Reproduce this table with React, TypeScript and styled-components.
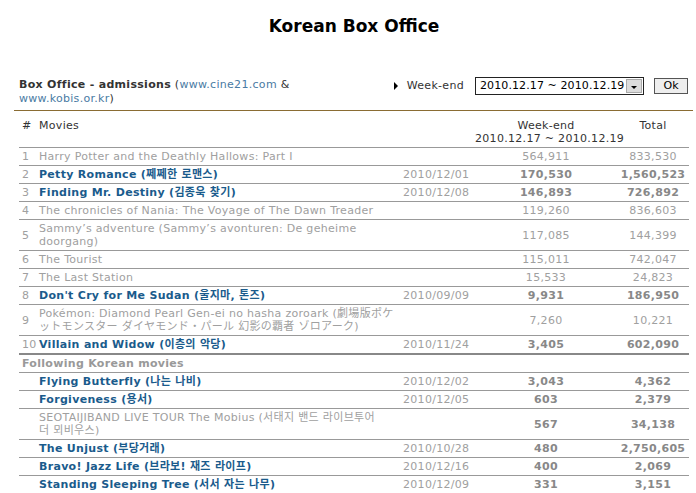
import React from 'react';
import styled, { createGlobalStyle } from 'styled-components';

const GlobalStyle = createGlobalStyle`
  html, body { margin: 0; padding: 0; background: #fff; }
  body {
    font-family: "DejaVu Sans", Verdana, "Noto Sans CJK KR", "Noto Sans CJK JP", sans-serif;
    font-size: 11px;
    letter-spacing: 0.3px;
    color: #333;
  }
`;

const Page = styled.div`
  width: 696px;
  padding-top: 16px;
`;

const Title = styled.h1`
  margin: 0 0 41px;
  padding-left: 12px;
  text-align: center;
  font-size: 17px;
  line-height: 20px;
  font-weight: bold;
  letter-spacing: 0;
  color: #000;
`;

const Toolbar = styled.div`
  display: flex;
  justify-content: space-between;
  align-items: flex-start;
  margin: 0 8px 0 19px;
  padding-bottom: 4px;
`;

const Source = styled.div`
  width: 340px;
  padding-top: 1px;
  line-height: 14px;
  color: #333;
`;

const SourceLabel = styled.b`
  font-weight: bold;
  color: #333;
`;

const Link = styled.a`
  color: #4a7ba3;
  text-decoration: none;
`;

const Controls = styled.div`
  display: flex;
  align-items: center;
  height: 17px;
`;

const Bullet = styled.span`
  width: 0;
  height: 0;
  border-top: 4px solid transparent;
  border-bottom: 4px solid transparent;
  border-left: 4px solid #000;
  margin-right: 9px;
`;

const ControlLabel = styled.span`
  color: #333;
  margin-right: 11px;
`;

const SelectBox = styled.div`
  box-sizing: border-box;
  width: 169px;
  height: 18px;
  border: 1px solid #222;
  display: flex;
  align-items: center;
  justify-content: space-between;
  padding-left: 4px;
  letter-spacing: 0.1px;
  color: #000;
  background: #fff;
`;

const DropButton = styled.span`
  box-sizing: border-box;
  width: 16px;
  height: 14px;
  margin-right: 1px;
  background: #dcdcdc;
  border: 1px solid #aaa;
  display: flex;
  align-items: flex-end;
  justify-content: center;
  padding-bottom: 3px;
`;

const DropArrow = styled.span`
  width: 0;
  height: 0;
  border-left: 3px solid transparent;
  border-right: 3px solid transparent;
  border-top: 3px solid #000;
`;

const OkButton = styled.button`
  box-sizing: border-box;
  margin-left: 10px;
  width: 34px;
  height: 16px;
  padding: 0;
  border: 1px solid #555;
  background: #eeeeee;
  font-family: inherit;
  font-size: 11px;
  line-height: 13px;
  color: #000;
`;

const Rule = styled.div`
  margin: 0 3px 0 14px;
  height: 1px;
  background: #8a6c33;
`;

const Table = styled.table`
  margin-left: 19px;
  width: 670px;
  border-collapse: collapse;
  table-layout: fixed;
`;

const HeadCell = styled.th<{ $w: number; $align?: string }>`
  box-sizing: border-box;
  width: ${(p) => p.$w}px;
  padding: 8px 0 2px ${(p) => (p.$align === 'center' ? 0 : 3)}px;
  text-align: ${(p) => p.$align || 'left'};
  vertical-align: top;
  font-weight: normal;
  line-height: 13px;
  color: #333;
  border-bottom: 1px solid #999;
  white-space: nowrap;
`;

const Row = styled.tr<{ $thick?: boolean }>`
  & > td {
    border-bottom: ${(p) => (p.$thick ? '2px solid #888' : '1px solid #999')};
  }
`;

const Cell = styled.td`
  padding: 2px 0 2px 3px;
  line-height: 13px;
  vertical-align: middle;
  color: #a0a0a0;
  white-space: nowrap;
`;

const MovieCell = styled(Cell)<{ $korean?: boolean }>`
  color: ${(p) => (p.$korean ? '#1a5b8c' : '#a0a0a0')};
  font-weight: ${(p) => (p.$korean ? 'bold' : 'normal')};
`;

const NumCell = styled(Cell)<{ $bold?: boolean }>`
  padding-left: 0;
  text-align: center;
  color: ${(p) => (p.$bold ? '#888' : '#a0a0a0')};
  font-weight: ${(p) => (p.$bold ? 'bold' : 'normal')};
`;

const SectionCell = styled(Cell)`
  font-weight: bold;
  color: #999;
`;

type Movie = {
  rank?: number;
  title: React.ReactNode;
  korean?: boolean;
  date?: string;
  weekend: string;
  total: string;
  boldNums?: boolean;
};

const top10: Movie[] = [
  { rank: 1, title: 'Harry Potter and the Deathly Hallows: Part I', weekend: '564,911', total: '833,530' },
  { rank: 2, title: 'Petty Romance (쩨쩨한 로맨스)', korean: true, date: '2010/12/01', weekend: '170,530', total: '1,560,523' },
  { rank: 3, title: 'Finding Mr. Destiny (김종욱 찾기)', korean: true, date: '2010/12/08', weekend: '146,893', total: '726,892' },
  { rank: 4, title: 'The chronicles of Nania: The Voyage of The Dawn Treader', weekend: '119,260', total: '836,603' },
  {
    rank: 5,
    title: (
      <>
        Sammy’s adventure (Sammy’s avonturen: De geheime
        <br />
        doorgang)
      </>
    ),
    weekend: '117,085',
    total: '144,399',
  },
  { rank: 6, title: 'The Tourist', weekend: '115,011', total: '742,047' },
  { rank: 7, title: 'The Last Station', weekend: '15,533', total: '24,823' },
  { rank: 8, title: "Don't Cry for Me Sudan (울지마, 톤즈)", korean: true, date: '2010/09/09', weekend: '9,931', total: '186,950' },
  {
    rank: 9,
    title: (
      <>
        Pokémon: Diamond Pearl Gen-ei no hasha zoroark (劇場版ポケ
        <br />
        ットモンスター ダイヤモンド・パール 幻影の覇者 ゾロアーク)
      </>
    ),
    weekend: '7,260',
    total: '10,221',
  },
  { rank: 10, title: 'Villain and Widow (이층의 악당)', korean: true, date: '2010/11/24', weekend: '3,405', total: '602,090' },
];

const following: Movie[] = [
  { title: 'Flying Butterfly (나는 나비)', korean: true, date: '2010/12/02', weekend: '3,043', total: '4,362' },
  { title: 'Forgiveness (용서)', korean: true, date: '2010/12/05', weekend: '603', total: '2,379' },
  {
    title: (
      <>
        SEOTAIJIBAND LIVE TOUR The Mobius (서태지 밴드 라이브투어
        <br />
        더 뫼비우스)
      </>
    ),
    boldNums: true,
    weekend: '567',
    total: '34,138',
  },
  { title: 'The Unjust (부당거래)', korean: true, date: '2010/10/28', weekend: '480', total: '2,750,605' },
  { title: 'Bravo! Jazz Life (브라보! 재즈 라이프)', korean: true, date: '2010/12/16', weekend: '400', total: '2,069' },
  { title: 'Standing Sleeping Tree (서서 자는 나무)', korean: true, date: '2010/12/09', weekend: '331', total: '3,151' },
];

const MovieRow = ({ m, thick }: { m: Movie; thick?: boolean }) => (
  <Row $thick={thick}>
    <Cell>{m.rank ?? ''}</Cell>
    <MovieCell $korean={m.korean}>{m.title}</MovieCell>
    <Cell>{m.date ?? ''}</Cell>
    <NumCell $bold={m.korean || m.boldNums}>{m.weekend}</NumCell>
    <NumCell $bold={m.korean || m.boldNums}>{m.total}</NumCell>
  </Row>
);

export default function App() {
  return (
    <Page>
      <GlobalStyle />
      <Title>Korean Box Office</Title>
      <Toolbar>
        <Source>
          <SourceLabel>Box Office - admissions</SourceLabel> (<Link>www.cine21.com</Link> &amp;{' '}
          <Link>www.kobis.or.kr</Link>)
        </Source>
        <Controls>
          <Bullet />
          <ControlLabel>Week-end</ControlLabel>
          <SelectBox>
            2010.12.17 ~ 2010.12.19
            <DropButton>
              <DropArrow />
            </DropButton>
          </SelectBox>
          <OkButton>Ok</OkButton>
        </Controls>
      </Toolbar>
      <Rule />
      <Table>
        <thead>
          <tr>
            <HeadCell $w={17}>#</HeadCell>
            <HeadCell $w={364}>Movies</HeadCell>
            <HeadCell $w={75}></HeadCell>
            <HeadCell $w={142} $align="center">
              Week-end
              <br />
              2010.12.17 ~ 2010.12.19
            </HeadCell>
            <HeadCell $w={72} $align="center">
              Total
            </HeadCell>
          </tr>
        </thead>
        <tbody>
          {top10.map((m, i) => (
            <MovieRow key={i} m={m} thick={i === top10.length - 1} />
          ))}
          <Row>
            <SectionCell colSpan={5}>Following Korean movies</SectionCell>
          </Row>
          {following.map((m, i) => (
            <MovieRow key={'f' + i} m={m} />
          ))}
        </tbody>
      </Table>
    </Page>
  );
}
